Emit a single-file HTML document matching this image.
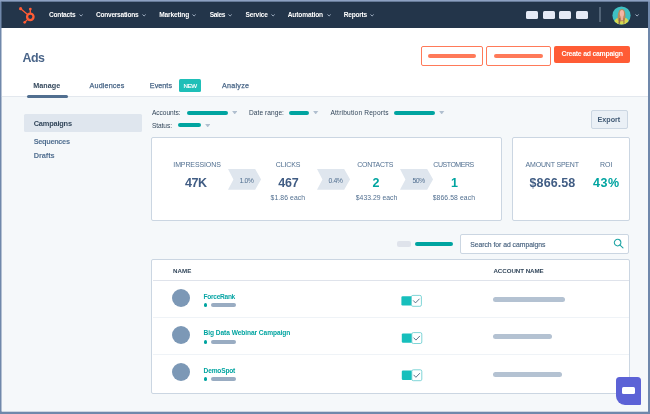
<!DOCTYPE html>
<html>
<head>
<meta charset="utf-8">
<title>Ads</title>
<style>
*{box-sizing:border-box;margin:0;padding:0}
html,body{width:650px;height:414px;overflow:hidden;background:#7088ab}
body{font-family:"Liberation Sans",sans-serif;position:relative;color:#33475b}
#app{position:absolute;left:2px;top:2px;width:646px;height:410px;background:#f5f8fa;overflow:hidden;filter:blur(.3px)}
.abs{position:absolute}
.t{position:absolute;white-space:nowrap;line-height:1;transform:translateY(-50%)}
#nav{position:absolute;left:0;top:0;width:646px;height:26px;background:#23354a}
#nav .t{color:#fff;font-weight:bold;font-size:6.6px}
.chev{position:absolute;width:4.2px;height:2.5px}
#head{position:absolute;left:0;top:26px;width:646px;height:69px;background:#fff;border-bottom:1px solid #e3e8ee}
.bar{position:absolute;border-radius:3px}
.teal{background:#00a4a0}
.card{position:absolute;background:#fff;border:1px solid #cbd6e2;border-radius:2px}
.lbl{color:#516f90;font-size:7px;letter-spacing:.2px}
.big{font-weight:bold;font-size:12.5px;color:#425b76}
.sub{font-size:6.8px;color:#516f90}
.pct{font-size:6.5px;color:#516f90}
.tl{color:#00a4a0}
.c{transform:translate(-50%,-50%)}
</style>
</head>
<body>
<div id="app">

<!-- NAV -->
<div id="nav">
  <svg class="abs" style="left:17px;top:5px" width="18" height="19" viewBox="0 0 18 19">
    <g fill="none" stroke="#ff5c35" stroke-linecap="round">
      <circle cx="11.3" cy="9.85" r="3.25" stroke-width="2.3"/>
      <line x1="11.3" y1="6" x2="11.3" y2="2.4" stroke-width="1.3"/>
      <line x1="8.6" y1="7.6" x2="2" y2="2" stroke-width="1.3"/>
      <line x1="8.7" y1="12.4" x2="6" y2="15" stroke-width="1.3"/>
    </g>
    <circle cx="11.3" cy="2.1" r="1.4" fill="#ff5c35"/>
    <circle cx="1.6" cy="1.7" r="1.6" fill="#ff5c35"/>
    <circle cx="5.7" cy="15.3" r="1.35" fill="#ff5c35"/>
  </svg>
  <svg class="chev" style="left:76.7px;top:12px" viewBox="0 0 5 3"><path d="M.6.6 2.5 2.4 4.4.6" fill="none" stroke="#b4c2d6" stroke-width="1.05"/></svg>
  <svg class="chev" style="left:139.6px;top:12px" viewBox="0 0 5 3"><path d="M.6.6 2.5 2.4 4.4.6" fill="none" stroke="#b4c2d6" stroke-width="1.05"/></svg>
  <svg class="chev" style="left:190.3px;top:12px" viewBox="0 0 5 3"><path d="M.6.6 2.5 2.4 4.4.6" fill="none" stroke="#b4c2d6" stroke-width="1.05"/></svg>
  <svg class="chev" style="left:226.3px;top:12px" viewBox="0 0 5 3"><path d="M.6.6 2.5 2.4 4.4.6" fill="none" stroke="#b4c2d6" stroke-width="1.05"/></svg>
  <svg class="chev" style="left:268.9px;top:12px" viewBox="0 0 5 3"><path d="M.6.6 2.5 2.4 4.4.6" fill="none" stroke="#b4c2d6" stroke-width="1.05"/></svg>
  <svg class="chev" style="left:324.8px;top:12px" viewBox="0 0 5 3"><path d="M.6.6 2.5 2.4 4.4.6" fill="none" stroke="#b4c2d6" stroke-width="1.05"/></svg>
  <svg class="chev" style="left:368.1px;top:12px" viewBox="0 0 5 3"><path d="M.6.6 2.5 2.4 4.4.6" fill="none" stroke="#b4c2d6" stroke-width="1.05"/></svg>

  <div class="abs" style="left:524.3px;top:9px;width:12.1px;height:7.5px;background:#e5eaf6;border-radius:1.5px"></div>
  <div class="abs" style="left:541px;top:9px;width:12.1px;height:7.5px;background:#e5eaf6;border-radius:1.5px"></div>
  <div class="abs" style="left:557.2px;top:9px;width:12.2px;height:7.5px;background:#e5eaf6;border-radius:1.5px"></div>
  <div class="abs" style="left:573.8px;top:9px;width:12.2px;height:7.5px;background:#e5eaf6;border-radius:1.5px"></div>
  <div class="abs" style="left:597.3px;top:5px;width:1.4px;height:15px;background:#516377"></div>
  <svg class="abs" style="left:610.2px;top:3.5px" width="19" height="19" viewBox="0 0 19 19">
    <defs><clipPath id="av"><circle cx="9.5" cy="9.5" r="9.1"/></clipPath></defs>
    <circle cx="9.5" cy="9.5" r="9.1" fill="#3fc0c3"/>
    <g clip-path="url(#av)">
      <path d="M1.5 19 C1.8 14 4 12.2 7 11.8 L12.5 11.8 C15.5 12.2 17 14 17.3 19Z" fill="#d6d84e"/>
      <path d="M6 14.5 C5 10 6 3.4 9.8 3 C13.4 3.2 14 8.5 13 13.5 L11.8 15 L7.4 15.5Z" fill="#b98a5c"/>
      <path d="M6.3 17.5 L7.2 12 L8.4 12 L8 18Z" fill="#8d6a48"/>
      <path d="M11.2 12 L12.4 12 L12.6 17.5 L11.4 17.8Z" fill="#a47a4e"/>
      <ellipse cx="9.9" cy="7.6" rx="2.1" ry="3.6" fill="#f3b5a5"/>
      <path d="M8.6 10.5 L11.3 10.5 L11 14.2 L9 14.2Z" fill="#efae9c"/>
    </g>
  </svg>
  <svg class="chev" style="left:632.9px;top:12px" viewBox="0 0 5 3"><path d="M.6.6 2.5 2.4 4.4.6" fill="none" stroke="#b4c2d6" stroke-width="1.05"/></svg>
</div>

<!-- HEADER -->
<div id="head">
  <div class="abs" style="left:177.3px;top:50.7px;width:21.8px;height:12.9px;background:#1fbfb8;border-radius:1.5px"></div>

  <div class="abs" style="left:418.5px;top:17.5px;width:62px;height:20px;border:1px solid #ff7a59;border-radius:2px;background:#fff"></div>
  <div class="bar" style="left:425.7px;top:25.6px;width:48px;height:4.4px;background:#ff7a59"></div>
  <div class="abs" style="left:484px;top:17.5px;width:64.5px;height:20px;border:1px solid #ff7a59;border-radius:2px;background:#fff"></div>
  <div class="bar" style="left:491.5px;top:25.6px;width:49.5px;height:4.4px;background:#ff7a59"></div>
  <div class="abs" style="left:552px;top:18px;width:75.7px;height:16.9px;border-radius:2px;background:#ff5c35"></div>
</div>
<div class="bar" style="left:25.3px;top:92.6px;width:41px;height:3.9px;background:#516f90"></div>

<!-- SIDEBAR -->
<div class="abs" style="left:22.3px;top:112px;width:117.7px;height:17.8px;background:#dfe6ee;border-radius:1.5px"></div>

<!-- FILTERS -->
<div class="bar teal" style="left:185px;top:108.5px;width:41px;height:4px"></div>
<svg class="abs" style="left:229.9px;top:109px" width="5.4" height="3.4" viewBox="0 0 46 30"><path d="M0 0H46L23 30Z" fill="#b0bfcf"/></svg>
<div class="bar teal" style="left:287.4px;top:108.5px;width:20px;height:4px"></div>
<svg class="abs" style="left:311.3px;top:109px" width="5.4" height="3.4" viewBox="0 0 46 30"><path d="M0 0H46L23 30Z" fill="#b0bfcf"/></svg>
<div class="bar teal" style="left:392px;top:108.5px;width:41px;height:4px"></div>
<svg class="abs" style="left:437.4px;top:109px" width="5.4" height="3.4" viewBox="0 0 46 30"><path d="M0 0H46L23 30Z" fill="#b0bfcf"/></svg>
<div class="bar teal" style="left:176.2px;top:121.1px;width:23px;height:4px"></div>
<svg class="abs" style="left:202.8px;top:121.5px" width="5.4" height="3.4" viewBox="0 0 46 30"><path d="M0 0H46L23 30Z" fill="#b0bfcf"/></svg>

<div class="abs" style="left:588.8px;top:108.2px;width:37px;height:18.6px;background:#eaf0f6;border:1px solid #cbd6e2;border-radius:2px"></div>

<!-- STATS CARD -->
<div class="card" style="left:149px;top:135px;width:351px;height:84px"></div>
<svg class="abs" style="left:225.5px;top:167.1px" width="33.1" height="20.8" viewBox="0 0 33.5 21" preserveAspectRatio="none"><path d="M0 0H27.5L33.5 10.5 27.5 21H0L5.5 10.5Z" fill="#dfe6ee"/></svg>
<svg class="abs" style="left:314.7px;top:167.1px" width="33.1" height="20.8" viewBox="0 0 33.5 21" preserveAspectRatio="none"><path d="M0 0H27.5L33.5 10.5 27.5 21H0L5.5 10.5Z" fill="#dfe6ee"/></svg>
<svg class="abs" style="left:398.4px;top:167.1px" width="33.1" height="20.8" viewBox="0 0 33.5 21" preserveAspectRatio="none"><path d="M0 0H27.5L33.5 10.5 27.5 21H0L5.5 10.5Z" fill="#dfe6ee"/></svg>

<div class="card" style="left:510px;top:135px;width:118px;height:84px"></div>

<!-- SEARCH ROW -->
<div class="abs" style="left:394.6px;top:239.2px;width:14px;height:5.8px;background:#dfe3eb;border-radius:2px"></div>
<div class="bar teal" style="left:412.5px;top:240px;width:38.5px;height:4.2px"></div>
<div class="abs" style="left:458px;top:232.4px;width:169px;height:19.6px;background:#fff;border:1px solid #cbd6e2;border-radius:2px"></div>
<svg class="abs" style="left:611px;top:236.2px" width="12" height="12" viewBox="0 0 12 12"><circle cx="4.6" cy="4.6" r="3.3" fill="none" stroke="#1fa5a5" stroke-width="1.05"/><line x1="7" y1="7.1" x2="10" y2="9.9" stroke="#1fa5a5" stroke-width="1.1" stroke-linecap="round"/></svg>

<!-- TABLE -->
<div class="card" style="left:149px;top:257px;width:479px;height:135px"></div>
<div class="abs" style="left:150.5px;top:277.5px;width:476px;height:1px;background:#dfe3eb"></div>
<div class="abs" style="left:150.5px;top:315px;width:476px;height:1px;background:#eff3f7"></div>
<div class="abs" style="left:150.5px;top:352.3px;width:476px;height:1px;background:#eff3f7"></div>

<div class="abs" style="left:169.5px;top:287.2px;width:18.2px;height:18.2px;border-radius:50%;background:#7c98b6"></div>
<div class="abs" style="left:201.5px;top:301.3px;width:3.8px;height:3.8px;border-radius:50%;background:#00a4a0"></div>
<div class="bar" style="left:209.1px;top:301px;width:24.6px;height:4px;background:#99acc2"></div>
<div class="bar" style="left:491.4px;top:295.3px;width:71.5px;height:5.2px;background:#b4c2d2"></div>

<div class="abs" style="left:169.5px;top:324px;width:18.2px;height:18.2px;border-radius:50%;background:#7c98b6"></div>
<div class="abs" style="left:201.5px;top:338.1px;width:3.8px;height:3.8px;border-radius:50%;background:#00a4a0"></div>
<div class="bar" style="left:209.1px;top:337.8px;width:24.6px;height:4px;background:#99acc2"></div>
<div class="bar" style="left:491.4px;top:332.3px;width:58.5px;height:5.2px;background:#b4c2d2"></div>

<div class="abs" style="left:169.5px;top:361.3px;width:18.2px;height:18.2px;border-radius:50%;background:#7c98b6"></div>
<div class="abs" style="left:201.5px;top:375.3px;width:3.8px;height:3.8px;border-radius:50%;background:#00a4a0"></div>
<div class="bar" style="left:209.1px;top:375px;width:24.6px;height:4px;background:#99acc2"></div>
<div class="bar" style="left:491.4px;top:369.5px;width:68.5px;height:5.2px;background:#b4c2d2"></div>

<!-- toggles -->
<svg class="abs" style="left:399px;top:292px" width="22" height="14" viewBox="0 0.0 22 14"><rect x="0.4" y="2.2" width="10.4" height="9.3" rx="1.2" fill="#17bfbc"/><rect x="10.4" y="1.4" width="10" height="10.9" rx="1.5" fill="#fff" stroke="#5fcacd" stroke-width=".8"/><path d="M12.2 6.45 14.5 8.9 18.5 4.75" fill="none" stroke="#425b76" stroke-width=".85"/></svg>
<svg class="abs" style="left:399px;top:329px" width="22" height="14" viewBox="-0.4 -0.2 22 14"><rect x="0.4" y="2.2" width="10.4" height="9.3" rx="1.2" fill="#17bfbc"/><rect x="10.4" y="1.4" width="10" height="10.9" rx="1.5" fill="#fff" stroke="#5fcacd" stroke-width=".8"/><path d="M12.2 6.45 14.5 8.9 18.5 4.75" fill="none" stroke="#425b76" stroke-width=".85"/></svg>
<svg class="abs" style="left:399px;top:366px" width="22" height="14" viewBox="-0.4 -0.4 22 14"><rect x="0.4" y="2.2" width="10.4" height="9.3" rx="1.2" fill="#17bfbc"/><rect x="10.4" y="1.4" width="10" height="10.9" rx="1.5" fill="#fff" stroke="#5fcacd" stroke-width=".8"/><path d="M12.2 6.45 14.5 8.9 18.5 4.75" fill="none" stroke="#425b76" stroke-width=".85"/></svg>

<div class="t" style="left:47.0px;top:13.4px;font-size:6.6px;color:#fff;font-weight:bold;letter-spacing:-0.23px;">Contacts</div>
<div class="t" style="left:94.0px;top:13.4px;font-size:6.6px;color:#fff;font-weight:bold;letter-spacing:-0.27px;">Conversations</div>
<div class="t" style="left:157.2px;top:13.4px;font-size:6.6px;color:#fff;font-weight:bold;letter-spacing:-0.14px;">Marketing</div>
<div class="t" style="left:207.7px;top:13.4px;font-size:6.6px;color:#fff;font-weight:bold;letter-spacing:-0.38px;">Sales</div>
<div class="t" style="left:243.4px;top:13.4px;font-size:6.6px;color:#fff;font-weight:bold;letter-spacing:-0.14px;">Service</div>
<div class="t" style="left:285.7px;top:13.4px;font-size:6.6px;color:#fff;font-weight:bold;letter-spacing:-0.13px;">Automation</div>
<div class="t" style="left:341.8px;top:13.4px;font-size:6.6px;color:#fff;font-weight:bold;letter-spacing:-0.25px;">Reports</div>
<div class="t" style="left:20.6px;top:55.7px;font-size:12.4px;color:#4a6589;font-weight:bold;letter-spacing:-0.60px;">Ads</div>
<div class="t" style="left:31.2px;top:83.6px;font-size:7.2px;color:#33475b;font-weight:bold;letter-spacing:0.07px;">Manage</div>
<div class="t" style="left:87.6px;top:83.6px;font-size:7.2px;color:#4a6788;letter-spacing:0.14px;-webkit-text-stroke:.25px #4a6788;">Audiences</div>
<div class="t" style="left:147.8px;top:83.6px;font-size:7.2px;color:#4a6788;letter-spacing:0.04px;-webkit-text-stroke:.25px #4a6788;">Events</div>
<div class="t" style="left:181.4px;top:84.3px;font-size:6.2px;color:#fff;letter-spacing:-0.42px;-webkit-text-stroke:.15px #fff;">NEW</div>
<div class="t" style="left:220.0px;top:83.6px;font-size:7.2px;color:#4a6788;letter-spacing:0.24px;-webkit-text-stroke:.25px #4a6788;">Analyze</div>
<div class="t" style="left:559.4px;top:52.4px;font-size:6.9px;color:#fff;font-weight:bold;letter-spacing:-0.23px;">Create ad campaign</div>
<div class="t" style="left:31.7px;top:121.7px;font-size:7.4px;color:#33475b;font-weight:bold;letter-spacing:-0.19px;">Campaigns</div>
<div class="t" style="left:31.7px;top:139.9px;font-size:7.4px;color:#516f90;font-weight:bold;letter-spacing:-0.34px;">Sequences</div>
<div class="t" style="left:31.7px;top:153.8px;font-size:7.4px;color:#516f90;font-weight:bold;letter-spacing:-0.07px;">Drafts</div>
<div class="t" style="left:149.9px;top:110.5px;font-size:6.6px;color:#33475b;letter-spacing:-0.02px;">Accounts:</div>
<div class="t" style="left:247.0px;top:110.5px;font-size:6.6px;color:#33475b;letter-spacing:0.05px;">Date range:</div>
<div class="t" style="left:328.5px;top:110.5px;font-size:6.6px;color:#33475b;letter-spacing:0.19px;">Attribution Reports</div>
<div class="t" style="left:149.9px;top:123.6px;font-size:6.6px;color:#33475b;letter-spacing:-0.07px;">Status:</div>
<div class="t" style="left:595.5px;top:117.7px;font-size:7.2px;color:#425b76;font-weight:bold;letter-spacing:-0.01px;">Export</div>
<div class="t" style="left:171.3px;top:162.0px;font-size:7.0px;color:#516f90;letter-spacing:-0.11px;">IMPRESSIONS</div>
<div class="t" style="left:183.0px;top:180.6px;font-size:12.5px;color:#415d84;font-weight:bold;letter-spacing:-0.47px;">47K</div>
<div class="t" style="left:237.6px;top:178.6px;font-size:6.9px;color:#516f90;letter-spacing:-0.44px;">1.0%</div>
<div class="t" style="left:273.8px;top:162.0px;font-size:7.0px;color:#516f90;letter-spacing:-0.14px;">CLICKS</div>
<div class="t" style="left:276.2px;top:180.6px;font-size:12.5px;color:#415d84;font-weight:bold;letter-spacing:-0.13px;">467</div>
<div class="t" style="left:268.5px;top:195.5px;font-size:6.8px;color:#516f90;letter-spacing:0.10px;">$1.86 each</div>
<div class="t" style="left:326.6px;top:178.6px;font-size:6.9px;color:#516f90;letter-spacing:-0.44px;">0.4%</div>
<div class="t" style="left:355.3px;top:162.0px;font-size:7.0px;color:#516f90;letter-spacing:-0.28px;">CONTACTS</div>
<div class="t" style="left:370.6px;top:180.6px;font-size:12.5px;color:#00a4a0;font-weight:bold;">2</div>
<div class="t" style="left:353.8px;top:195.5px;font-size:6.8px;color:#516f90;letter-spacing:0.03px;">$433.29 each</div>
<div class="t" style="left:410.4px;top:178.6px;font-size:6.9px;color:#516f90;letter-spacing:-0.50px;">50%</div>
<div class="t" style="left:431.3px;top:162.0px;font-size:7.0px;color:#516f90;letter-spacing:-0.46px;">CUSTOMERS</div>
<div class="t" style="left:449.0px;top:180.6px;font-size:12.5px;color:#00a4a0;font-weight:bold;">1</div>
<div class="t" style="left:430.7px;top:195.5px;font-size:6.8px;color:#516f90;letter-spacing:0.10px;">$866.58 each</div>
<div class="t" style="left:523.5px;top:162.0px;font-size:7.0px;color:#516f90;letter-spacing:-0.18px;">AMOUNT SPENT</div>
<div class="t" style="left:527.6px;top:181.0px;font-size:12.5px;color:#415d84;font-weight:bold;letter-spacing:0.07px;">$866.58</div>
<div class="t" style="left:598.0px;top:162.0px;font-size:7.0px;color:#516f90;letter-spacing:-0.03px;">ROI</div>
<div class="t" style="left:591.0px;top:181.0px;font-size:12.5px;color:#00a4a0;font-weight:bold;letter-spacing:0.58px;">43%</div>
<div class="t" style="left:468.2px;top:242.9px;font-size:6.8px;color:#48627f;letter-spacing:-0.02px;-webkit-text-stroke:.15px #48627f;">Search for ad campaigns</div>
<div class="t" style="left:171.1px;top:268.9px;font-size:6.2px;color:#33475b;font-weight:bold;letter-spacing:-0.01px;">NAME</div>
<div class="t" style="left:491.4px;top:268.9px;font-size:6.2px;color:#33475b;font-weight:bold;letter-spacing:-0.05px;">ACCOUNT NAME</div>
<div class="t" style="left:201.6px;top:294.5px;font-size:6.6px;color:#0ba6a6;font-weight:bold;letter-spacing:-0.30px;">ForceRank</div>
<div class="t" style="left:201.6px;top:331.3px;font-size:6.6px;color:#00a4a0;font-weight:bold;letter-spacing:-0.06px;">Big Data Webinar Campaign</div>
<div class="t" style="left:201.6px;top:368.5px;font-size:6.6px;color:#00a4a0;font-weight:bold;letter-spacing:-0.18px;">DemoSpot</div>
<!-- CHAT -->
<div class="abs" style="left:614px;top:375.3px;width:24.7px;height:27.8px;background:#5c62d6;border-radius:3.5px 3.5px 1px 9px"></div>
<div class="abs" style="left:619.8px;top:384.7px;width:13.7px;height:7.1px;background:#fff;border-radius:1.5px"></div>

</div>
<svg style="position:absolute;left:0;top:0" width="650" height="414" viewBox="0 0 650 414">
<rect x="0" y="0" width="650" height="1.7" fill="#8da1c2"/>
<rect x="1.5" y="1.7" width="646.6" height=".4" fill="#23354a"/>
<rect x="1.5" y="1.7" width=".6" height="26.4" fill="#23354a"/>
<rect x="1.5" y="28" width=".6" height="69" fill="#fff"/>
<rect x="1.5" y="97" width=".6" height="314.7" fill="#f5f8fa"/>
<rect x="0" y="411.7" width="650" height=".4" fill="#7088ab"/>
</svg>
</body>
</html>
